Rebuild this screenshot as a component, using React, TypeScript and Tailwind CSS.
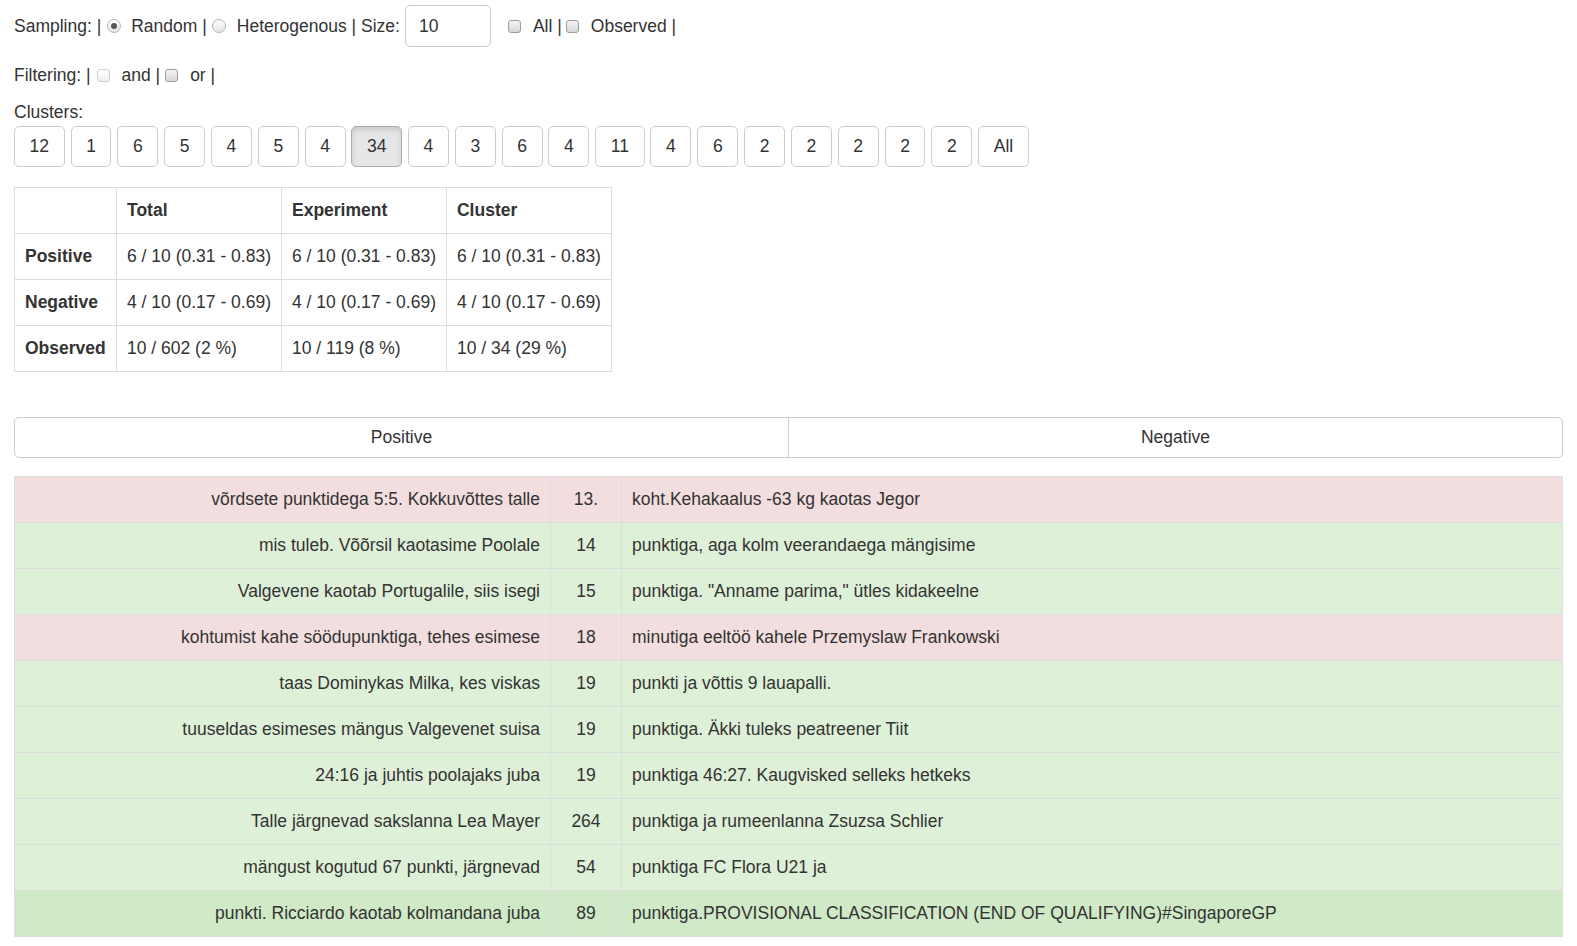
const clusters = ["12", "1", "6", "5", "4", "5", "4", "34", "4", "3", "6", "4", "11", "4", "6", "2", "2", "2", "2", "2", "All"];

const summary = [
  { label: "Positive", total: "6 / 10 (0.31 - 0.83)", experiment: "6 / 10 (0.31 - 0.83)", cluster: "6 / 10 (0.31 - 0.83)" },
  { label: "Negative", total: "4 / 10 (0.17 - 0.69)", experiment: "4 / 10 (0.17 - 0.69)", cluster: "4 / 10 (0.17 - 0.69)" },
  { label: "Observed", total: "10 / 602 (2 %)", experiment: "10 / 119 (8 %)", cluster: "10 / 34 (29 %)" },
];

const rows = [
  { left: "võrdsete punktidega 5:5. Kokkuvõttes talle", mid: "13.", right: "koht.Kehakaalus -63 kg kaotas Jegor", bg: "bg-[#f2dede]" },
  { left: "mis tuleb. Võõrsil kaotasime Poolale", mid: "14", right: "punktiga, aga kolm veerandaega mängisime", bg: "bg-[#dff0d8]" },
  { left: "Valgevene kaotab Portugalile, siis isegi", mid: "15", right: "punktiga. \"Anname parima,\" ütles kidakeelne", bg: "bg-[#dff0d8]" },
  { left: "kohtumist kahe söödupunktiga, tehes esimese", mid: "18", right: "minutiga eeltöö kahele Przemyslaw Frankowski", bg: "bg-[#f2dede]" },
  { left: "taas Dominykas Milka, kes viskas", mid: "19", right: "punkti ja võttis 9 lauapalli.", bg: "bg-[#dff0d8]" },
  { left: "tuuseldas esimeses mängus Valgevenet suisa", mid: "19", right: "punktiga. Äkki tuleks peatreener Tiit", bg: "bg-[#dff0d8]" },
  { left: "24:16 ja juhtis poolajaks juba", mid: "19", right: "punktiga 46:27. Kaugvisked selleks hetkeks", bg: "bg-[#dff0d8]" },
  { left: "Talle järgnevad sakslanna Lea Mayer", mid: "264", right: "punktiga ja rumeenlanna Zsuzsa Schlier", bg: "bg-[#dff0d8]" },
  { left: "mängust kogutud 67 punkti, järgnevad", mid: "54", right: "punktiga FC Flora U21 ja", bg: "bg-[#dff0d8]" },
  { left: "punkti. Ricciardo kaotab kolmandana juba", mid: "89", right: "punktiga.PROVISIONAL CLASSIFICATION (END OF QUALIFYING)#SingaporeGP", bg: "bg-[#d0e9c6]" },
];

const Radio = ({ checked }: { checked?: boolean }) => (
  <span className="inline-flex w-[14px] h-[14px] rounded-full border border-[#b5b5b5] bg-gradient-to-b from-[#ffffff] to-[#e4e4e4] items-center justify-center shrink-0">
    {checked && <span className="w-[6px] h-[6px] rounded-full bg-[#555]" />}
  </span>
);

const Check = ({ light }: { light?: boolean }) => (
  <span
    className={
      light
        ? "inline-block w-[13px] h-[13px] rounded-[3px] border border-[#d0d0d0] bg-gradient-to-b from-[#ffffff] to-[#efefef] shrink-0"
        : "inline-block w-[13px] h-[13px] rounded-[3px] border border-[#9c9c9c] bg-gradient-to-b from-[#f4f4f4] to-[#d6d6d6] shrink-0"
    }
  />
);

export default function App() {
  return (
    <div className="px-[14px] text-[17.5px] leading-[25px] text-[#333] font-['Liberation_Sans',Arial,sans-serif] bg-white min-h-screen">
      {/* Sampling */}
      <div className="flex items-center h-[42px] mt-[5px] whitespace-pre">
        <span>Sampling: |</span>
        <span className="ml-[6px] mr-[10px] flex"><Radio checked /></span>
        <span>Random |</span>
        <span className="ml-[5px] mr-[11px] flex"><Radio /></span>
        <span>Heterogenous | Size:</span>
        <div className="ml-[5px] w-[86px] h-[42px] border border-[#ccc] rounded-[5px] flex items-center pl-[13px]">10</div>
        <span className="ml-[17px] mr-[12px] flex"><Check /></span>
        <span>All |</span>
        <span className="ml-[4px] mr-[12px] flex"><Check /></span>
        <span>Observed |</span>
      </div>

      {/* Filtering */}
      <div className="flex items-center h-[25px] mt-[16px] whitespace-pre">
        <span>Filtering: |</span>
        <span className="ml-[6px] mr-[12px] flex"><Check light /></span>
        <span>and |</span>
        <span className="ml-[5px] mr-[12px] flex"><Check /></span>
        <span>or |</span>
      </div>

      <div className="mt-[12px] h-[25px]">Clusters:</div>

      {/* Cluster buttons */}
      <div className="flex gap-[5.9px] mt-[1px]">
        {clusters.map((c, i) => (
          <button
            key={i}
            className={
              c === "34"
                ? "h-[41px] px-[14.6px] border border-[#adadad] rounded-[5px] bg-[#e6e6e6] shadow-[inset_0_3px_5px_rgba(0,0,0,0.125)]"
                : "h-[41px] px-[14.6px] border border-[#ccc] rounded-[5px] bg-white"
            }
          >
            {c}
          </button>
        ))}
      </div>

      {/* Summary table */}
      <table className="mt-[20px] border-collapse">
        <thead>
          <tr>
            <th className="border border-[#ddd] h-[46px] px-[10px] w-[102px]"></th>
            <th className="border border-[#ddd] h-[46px] px-[10px] text-left font-bold w-[164px]">Total</th>
            <th className="border border-[#ddd] h-[46px] px-[10px] text-left font-bold w-[164px]">Experiment</th>
            <th className="border border-[#ddd] h-[46px] px-[10px] text-left font-bold w-[164px]">Cluster</th>
          </tr>
        </thead>
        <tbody>
          {summary.map((r) => (
            <tr key={r.label}>
              <td className="border border-[#ddd] h-[46px] px-[10px] font-bold">{r.label}</td>
              <td className="border border-[#ddd] h-[46px] px-[10px] whitespace-nowrap">{r.total}</td>
              <td className="border border-[#ddd] h-[46px] px-[10px] whitespace-nowrap">{r.experiment}</td>
              <td className="border border-[#ddd] h-[46px] px-[10px] whitespace-nowrap">{r.cluster}</td>
            </tr>
          ))}
        </tbody>
      </table>

      {/* Positive / Negative */}
      <div className="mt-[45px] flex h-[41px] border border-[#ccc] rounded-[5px]">
        <div className="flex-1 flex items-center justify-center border-r border-[#ccc]">Positive</div>
        <div className="flex-1 flex items-center justify-center">Negative</div>
      </div>

      {/* Data table */}
      <table className="mt-[18px] w-full border-collapse">
        <tbody>
          {rows.map((r, i) => (
            <tr key={i} className={r.bg}>
              <td className="border border-[#ddd] h-[46px] px-[10px] text-right w-[536px]">{r.left}</td>
              <td className="border border-[#ddd] h-[46px] px-[10px] text-center w-[71px]">{r.mid}</td>
              <td className="border border-[#ddd] h-[46px] px-[10px] text-left">{r.right}</td>
            </tr>
          ))}
        </tbody>
      </table>
    </div>
  );
}
